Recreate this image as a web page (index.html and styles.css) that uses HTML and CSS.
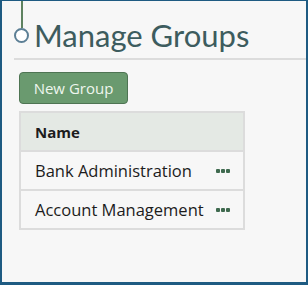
FILE: index.html
```html
<!DOCTYPE html>
<html>
<head>
<meta charset="utf-8">
<link rel="stylesheet" href="styles.css">
</head>
<body>
<div class="frame">
  <header class="head">
    <div class="marker"><span class="stem"></span><span class="ring"></span></div>
    <h1 class="title">Manage Groups</h1>
  </header>
  <div class="content">
    <button class="btn">New Group</button>
    <table class="grid">
      <thead><tr><th>Name</th></tr></thead>
      <tbody>
        <tr><td><span class="cell"><span>Bank Administration</span><span class="dots"><i></i><i></i><i></i></span></span></td></tr>
        <tr><td><span class="cell"><span>Account Management</span><span class="dots"><i></i><i></i><i></i></span></span></td></tr>
      </tbody>
    </table>
  </div>
</div>
</body>
</html>
```

FILE: styles.css
```css
html, body { margin: 0; padding: 0; }
body { width: 308px; height: 285px; overflow: hidden; font-family: "Open Sans", Lato, sans-serif; }
.frame {
  box-sizing: border-box;
  width: 308px; height: 285px;
  background: #f7f7f7;
  border-style: solid;
  border-color: #1e5b82;
  border-width: 1px 2px 3px 2px;
}
.head {
  display: flex;
  align-items: flex-start;
  margin-left: 12px;
  border-bottom: 2px solid #dcdcdc;
  height: 57px;
}
.marker { display: flex; flex-direction: column; align-items: center; width: 15px; }
.stem { width: 2px; height: 27px; background: #5e8260; }
.ring { box-sizing: border-box; width: 15px; height: 15px; border: 2px solid #5c7f95; border-radius: 50%; background: #fff; }
.title {
  margin: 16px 0 0 5px;
  font-family: Lato, sans-serif;
  font-weight: 400;
  font-size: 31px;
  line-height: 36px;
  color: #3d5c5e;
}
.content { padding: 12px 0 0 17px; }
.btn {
  display: block;
  box-sizing: border-box;
  width: 109px; height: 32px;
  background: #6a9a6f;
  border: 1px solid #4e7453;
  border-radius: 4px;
  color: #eef6ee;
  font-family: "Open Sans", sans-serif;
  font-size: 15px;
  padding: 0;
}
.grid {
  margin-top: 7px;
  border-collapse: collapse;
  width: 226px;
  border: 2px solid #dcdcdc;
}
.grid th {
  background: #e4e9e4;
  text-align: left;
  font-weight: 700;
  font-size: 15px;
  color: #1c1c1c;
  height: 37px;
  padding: 0 0 0 14px;
  border-bottom: 2px solid #dcdcdc;
}
.grid td {
  background: #f7f7f7;
  height: 37px;
  padding: 0 13px 0 14px;
  font-size: 16.5px;
  color: #1c1c1c;
  border-bottom: 2px solid #dcdcdc;
}
.cell { display: flex; align-items: center; justify-content: space-between; }
.dots { display: flex; gap: 1px; }
.dots i { width: 4px; height: 4px; border-radius: 1px; background: #3f6a4f; }
```
